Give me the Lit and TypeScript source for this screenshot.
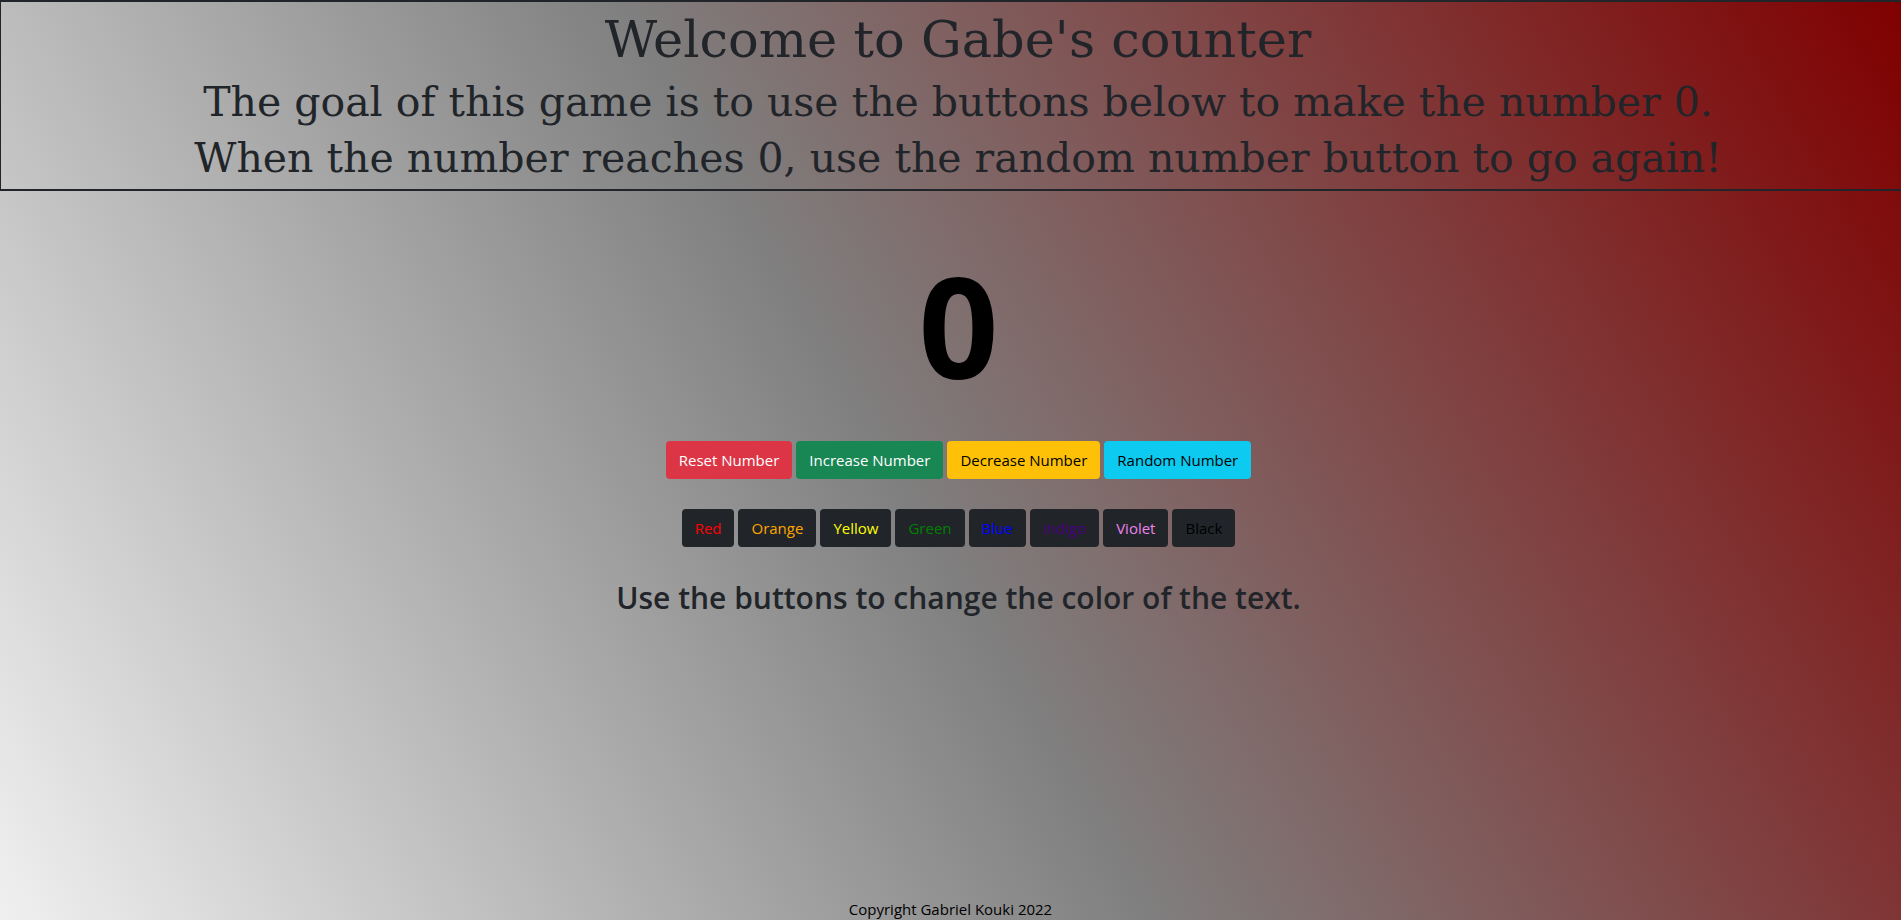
import { LitElement, html, css } from "lit";
import { customElement, state } from "lit/decorators.js";
import { styleMap } from "lit/directives/style-map.js";

const COLORS = ["Red", "Orange", "Yellow", "Green", "Blue", "Indigo", "Violet", "Black"];

@customElement("app-root")
export class AppRoot extends LitElement {
  static styles = css`
    :host {
      display: block;
      overflow: hidden;
      color: #212529;
      font-family: "Segoe UI", "Open Sans", sans-serif;
      font-size: 15px;
      line-height: 24px;
    }
    .page {
      display: flex;
      flex-direction: column;
      min-height: calc(100vh - 1px);
      background: linear-gradient(60deg, #f0f0f0, #808080 47%, #800000);
    }
    .content {
      flex: 1;
      width: calc(100% + 16px);
      text-align: center;
    }
    .banner {
      margin-left: -1px;
      padding: 8px 0 3px;
      border: 2px solid #212529;
      font-family: "DejaVu Serif", serif;
    }
    h1,
    h2,
    h3 {
      margin: 0;
      font-weight: 500;
    }
    .title {
      margin-bottom: 4px;
      font-size: 51px;
      line-height: 60px;
    }
    .goal {
      font-size: 41px;
      line-height: 56px;
    }
    .count {
      display: block;
      margin-top: 45px;
      font-size: 140px;
      font-weight: 700;
      line-height: 178px;
    }
    .buttons {
      display: flex;
      flex-wrap: wrap;
      justify-content: center;
      gap: 4px;
      margin-top: 27px;
    }
    .row-colors {
      margin-top: 30px;
    }
    .btn {
      padding: 6px 12px;
      border: 1px solid transparent;
      border-radius: 4px;
      font: inherit;
      cursor: pointer;
    }
    .reset {
      color: #fff;
      background-color: #dc3545;
    }
    .increase {
      color: #fff;
      background-color: #198754;
    }
    .decrease {
      color: #000;
      background-color: #ffc107;
    }
    .random {
      color: #000;
      background-color: #0dcaf0;
    }
    .swatch {
      background-color: #212529;
    }
    .hint {
      margin-top: 32px;
      font-size: 30px;
      font-weight: 600;
      line-height: 38px;
    }
    .footer {
      color: #000;
      line-height: 22px;
      text-align: center;
    }
  `;

  @state() private count = 0;
  @state() private textColor = "black";

  private randomize() {
    this.count = Math.floor(Math.random() * 201) - 100;
  }

  render() {
    return html`
      <div class="page">
        <main class="content">
          <header class="banner">
            <h1 class="title">Welcome to Gabe's counter</h1>
            <h2 class="goal">The goal of this game is to use the buttons below to make the number 0.</h2>
            <h2 class="goal">When the number reaches 0, use the random number button to go again!</h2>
          </header>
          <output class="count" style=${styleMap({ color: this.textColor })}>${this.count}</output>
          <div class="buttons">
            <button class="btn reset" @click=${() => (this.count = 0)}>Reset Number</button>
            <button class="btn increase" @click=${() => this.count++}>Increase Number</button>
            <button class="btn decrease" @click=${() => this.count--}>Decrease Number</button>
            <button class="btn random" @click=${this.randomize}>Random Number</button>
          </div>
          <div class="buttons row-colors">
            ${COLORS.map(
              (name) => html`<button
                class="btn swatch"
                style=${styleMap({ color: name.toLowerCase() })}
                @click=${() => (this.textColor = name.toLowerCase())}
              >${name}</button>`
            )}
          </div>
          <h3 class="hint">Use the buttons to change the color of the text.</h3>
        </main>
        <footer class="footer">Copyright Gabriel Kouki 2022</footer>
      </div>
    `;
  }
}
